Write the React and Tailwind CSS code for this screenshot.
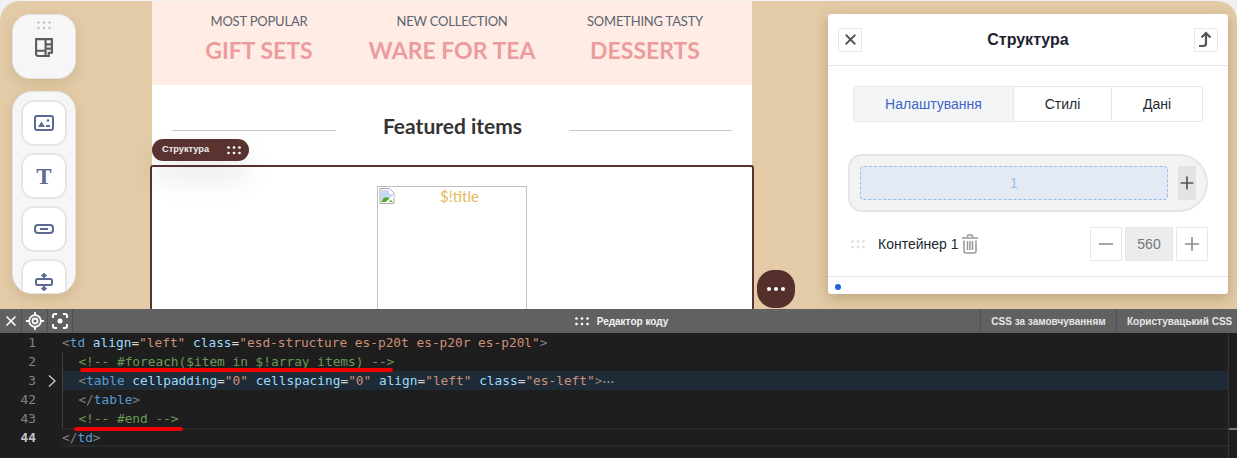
import { X, Minus, Plus, LocateFixed } from 'lucide-react';

const uiFont = "font-['Liberation_Sans',Arial,sans-serif]";
const emailFont = "font-['Lato','Noto_Sans',sans-serif]";

function Dots({ className = '', size = 2 }) {
  return (
    <svg width="14" height="9" viewBox="0 0 14 9" className={className} fill="currentColor">
      {[1.5, 7, 12.5].map((x) =>
        [1.5, 7].map((y) => <circle key={`${x}-${y}`} cx={x} cy={y} r={size / 1.2} />)
      )}
    </svg>
  );
}

function ToolButton({ children }) {
  return (
    <div className="w-[46px] h-[46px] shrink-0 rounded-[13px] bg-white border-2 border-[#e6e6e6] flex items-center justify-center">
      {children}
    </div>
  );
}

function LeftToolbar() {
  const ink = '#5a6a94';
  return (
    <div className="w-[152px] shrink-0 pl-3 pt-[13px] flex flex-col gap-3">
      <div className="w-16 h-[65px] rounded-[18px] bg-[#f6f6f6] border border-[#e4e4e4] shadow-[0_4px_12px_rgba(90,60,20,0.14)] flex flex-col items-center pt-[6px]">
        <Dots className="text-[#c4c4c4]" size={1.6} />
        <svg width="20" height="20" viewBox="0 0 19 19" fill="none" stroke="#5c5c5c" strokeWidth="2" className="mt-[7px]">
          <path d="M2 2h15v13h-3v3H4a2 2 0 0 1-2-2z" />
          <path d="M2 13h9v5M11 2v13M11 7h6M11 11h6" />
        </svg>
      </div>
      <div className="w-16 h-[203px] rounded-[20px] bg-[#f6f6f6] border border-[#e4e4e4] shadow-[0_4px_12px_rgba(90,60,20,0.14)] overflow-hidden flex flex-col items-center gap-[7px] pt-2">
        <ToolButton>
          <svg width="20" height="16" viewBox="0 0 20 16" fill="none">
            <rect x="1" y="1" width="18" height="14" rx="2" stroke={ink} strokeWidth="2" />
            <path d="M4 12l3.500-5.500L11 12z" fill={ink} />
            <circle cx="14" cy="5.500" r="1.300" fill={ink} />
            <rect x="12" y="10" width="4" height="2" fill={ink} />
          </svg>
        </ToolButton>
        <ToolButton>
          <span className="font-['Liberation_Serif',serif] text-[23px] leading-none font-bold text-[#5a6a94]">T</span>
        </ToolButton>
        <ToolButton>
          <svg width="20" height="10" viewBox="0 0 20 10" fill="none" stroke={ink} strokeWidth="2">
            <rect x="1" y="1" width="18" height="8" rx="3" />
            <path d="M6 5h8" />
          </svg>
        </ToolButton>
        <ToolButton>
          <svg width="18" height="18" viewBox="0 0 18 18" fill="none" stroke={ink} strokeWidth="2">
            <rect x="1" y="6" width="16" height="6" rx="1.500" />
            <path d="M9 1v5M6.500 3.200L9 1l2.500 2.200M9 12v5M6.500 14.800L9 17l2.500-2.200" />
          </svg>
        </ToolButton>
      </div>
    </div>
  );
}

function Promo({ small, big, width }) {
  return (
    <div className={`${width} shrink-0 flex flex-col items-center whitespace-nowrap`}>
      <p className="text-[13px] leading-[18px] tracking-[-0.2px] text-[#5d6470]">{small}</p>
      <p className="mt-[5px] text-[23px] leading-[30px] font-bold text-[#ed9c9e]">{big}</p>
    </div>
  );
}

function EmailCanvas() {
  return (
    <div className={`relative w-[600px] shrink-0 h-full bg-white ${emailFont}`}>
      <div className="h-[84px] bg-[#feece5] flex pt-[11px]">
        <Promo small="MOST POPULAR" big="GIFT SETS" width="w-[214px]" />
        <Promo small="NEW COLLECTION" big="WARE FOR TEA" width="w-[172px]" />
        <Promo small="SOMETHING TASTY" big="DESSERTS" width="w-[214px]" />
      </div>
      <div className="flex items-center px-5 h-[37px] mt-[24px]">
        <div className="w-[164px] h-px bg-[#c8c8c8] mt-[6px]" />
        <p className="w-[233px] text-center text-[21px] font-bold text-[#333333] -mt-[4px]">Featured items</p>
        <div className="w-[163px] h-px bg-[#c8c8c8] mt-[6px]" />
      </div>
      <div className="absolute left-[-2px] right-[-2px] top-[164px] bottom-0 border-2 border-b-0 border-[#5a3330] rounded-t-[3px] flex justify-center pl-[2px]">
        <div className="w-[150px] mt-[19px] ml-[-2px] border border-b-0 border-[#c0c0c0] relative text-center">
          <svg width="16" height="16" viewBox="0 0 16 16" className="absolute left-[1px] top-[1px]">
            <path d="M1 .5h9.500L15 5v10.500H1z" fill="#fff" stroke="#a9a9a9" />
            <path d="M2 2h8v4h4v4L2 12z" fill="#c7d9f5" />
            <path d="M2 14c2-5 6-6 9-3l3 3z" fill="#5aa832" />
            <path d="M7 15l8-7" stroke="#fff" strokeWidth="2" />
          </svg>
          <span className="block text-[15px] leading-[19px] text-[#e8b85c] ml-[16px] pr-[1px]">$!title</span>
        </div>
      </div>
      <div className={`absolute left-0 top-[138px] w-[97px] h-[22px] rounded-[11px] bg-[#5a3330] shadow-[0_16px_30px_rgba(0,0,0,0.10)] flex items-center justify-between pl-[10px] pr-[8px] ${uiFont}`}>
        <span className="text-[9.250px] font-bold text-[#ededed]">Структура</span>
        <Dots className="text-white" size={1.6} />
      </div>
    </div>
  );
}

function SidePanel() {
  return (
    <div className={`w-[400px] h-[280px] mt-[13px] ml-[76px] bg-white rounded-[3px] shadow-[0_4px_14px_rgba(90,60,20,0.28)] flex flex-col ${uiFont}`}>
      <div className="h-[52px] shrink-0 border-b border-[#e1e4e8] flex items-center justify-between px-[10px]">
        <div className="w-6 h-6 border border-[#e8e8e8] rounded-[2px] flex items-center justify-center">
          <X size={17} strokeWidth={2.6} className="text-[#555555]" />
        </div>
        <span className="text-[16px] font-bold text-[#1d2430]">Структура</span>
        <div className="w-6 h-6 border border-[#e8e8e8] rounded-[2px] flex items-center justify-center">
          <svg width="15" height="17" viewBox="0 0 15 17" fill="none" stroke="#555555" strokeWidth="2.200">
            <path d="M1 15h4c1.500 0 3-1 3-2.500V2.500M3.500 6.500L8 2l4.500 4.500" />
          </svg>
        </div>
      </div>
      <div className="mx-[25px] mt-5 h-[36px] flex border border-[#e6e8ec] rounded-[3px] text-[14px] text-[#222831]">
        <div className="w-[160px] bg-[#f4f5f7] text-[#3f66c9] border-r border-[#e6e8ec] flex items-center justify-center">Налаштування</div>
        <div className="w-[98px] border-r border-[#e6e8ec] flex items-center justify-center">Стилі</div>
        <div className="flex-1 flex items-center justify-center">Дані</div>
      </div>
      <div className="mx-5 mt-8 h-[58px] rounded-l-[14px] rounded-r-[29px] bg-[#f3f3f3] border-2 border-[#e5e5e5] flex items-center pl-[10px]">
        <div className="w-[308px] h-[34px] rounded-[4px] bg-[#e4eaf4] border border-dashed border-[#94bdf0] flex items-center justify-center text-[14px] text-[#94bdf0]">1</div>
        <div className="w-[18px] h-[34px] ml-[10px] bg-[#e3e3e3] flex items-center justify-center">
          <Plus size={20} strokeWidth={2} className="text-[#555555] shrink-0" />
        </div>
      </div>
      <div className="mt-[15px] h-[34px] flex items-center pl-[23px] pr-5">
        <Dots className="text-[#dcdcdc]" size={1.6} />
        <span className="ml-[13px] text-[14px] text-[#222831]">Контейнер 1</span>
        <svg width="16" height="20" viewBox="0 0 16 20" fill="none" stroke="#999999" strokeWidth="1.500" className="ml-[3px]">
          <path d="M5.500 3V2a1 1 0 0 1 1-1h3a1 1 0 0 1 1 1v1M0 4h16M2 6.500V17a2 2 0 0 0 2 2h8a2 2 0 0 0 2-2V6.500M5.500 7v9M8 7v9M10.500 7v9" />
        </svg>
        <div className="ml-auto flex gap-[3px]">
          <div className="w-8 h-[34px] border border-[#e6e8ec] flex items-center justify-center">
            <Minus size={22} strokeWidth={1.8} className="text-[#8a8a8a] shrink-0" />
          </div>
          <div className="w-12 h-[34px] bg-[#ebecee] border border-[#e6e8ec] flex items-center justify-center text-[14px] text-[#777777]">560</div>
          <div className="w-8 h-[34px] border border-[#e6e8ec] flex items-center justify-center">
            <Plus size={22} strokeWidth={1.8} className="text-[#8a8a8a] shrink-0" />
          </div>
        </div>
      </div>
      <div className="mt-[15px] flex-1 border-t border-[#e4e6ea] pl-[7px] pt-[7px]">
        <div className="w-[6px] h-[6px] rounded-full bg-[#2160d8]" />
      </div>
    </div>
  );
}

const tag = 'text-[#569cd6]';
const attr = 'text-[#9cdcfe]';
const str = 'text-[#ce9178]';
const punct = 'text-[#808080]';
const comment = 'text-[#6a9955]';
const plain = 'text-[#d4d4d4]';

function CodeLine({ num, active, caret, guide, highlight, children }) {
  return (
    <div className="h-[19px] flex">
      <div className={`w-[36px] shrink-0 text-right ${active ? 'text-[#c6c6c6] font-bold' : 'text-[#858585]'}`}>{num}</div>
      <div className="w-[26px] shrink-0 flex items-center pl-[12px]">
        {caret && (
          <svg width="8" height="12" viewBox="0 0 8 12" fill="none" stroke="#c5c5c5" strokeWidth="1.500">
            <path d="M1 .5L7 6l-6 5.500" />
          </svg>
        )}
      </div>
      <div className={`flex-1 flex items-center whitespace-pre ${highlight ? 'bg-[#1f2b36]' : ''} ${active ? 'shadow-[inset_0_2px_0_#282828,inset_0_-2px_0_#282828]' : ''} ${guide ? 'border-l border-[#404040]' : ''}`}>
        <span>{children}</span>
      </div>
    </div>
  );
}

function CodeEditor() {
  return (
    <div className="flex-1 min-h-0 bg-[#1e1e1e] relative font-['DejaVu_Sans_Mono','Liberation_Mono',monospace] text-[12.800px] leading-[19px] pr-[9px]">
      <CodeLine num="1">
        <span className={punct}>{'<'}</span><span className={tag}>td</span><span className={attr}> align</span><span className={plain}>=</span><span className={str}>"left"</span><span className={attr}> class</span><span className={plain}>=</span><span className={str}>"esd-structure es-p20t es-p20r es-p20l"</span><span className={punct}>{'>'}</span>
      </CodeLine>
      <CodeLine num="2" guide>
        <span className={comment}>{'  <!-- #foreach($item in $!array items) -->'}</span>
      </CodeLine>
      <CodeLine num="3" caret guide highlight>
        <span className={punct}>{'  <'}</span><span className={tag}>table</span><span className={attr}> cellpadding</span><span className={plain}>=</span><span className={str}>"0"</span><span className={attr}> cellspacing</span><span className={plain}>=</span><span className={str}>"0"</span><span className={attr}> align</span><span className={plain}>=</span><span className={str}>"left"</span><span className={attr}> class</span><span className={plain}>=</span><span className={str}>"es-left"</span><span className={punct}>{'>'}</span>
        <svg width="11" height="4" viewBox="0 0 11 4" fill="#9a9a9a" className="inline-block ml-[1px] align-middle">
          <circle cx="1.500" cy="2" r="1" />
          <circle cx="5.500" cy="2" r="1" />
          <circle cx="9.500" cy="2" r="1" />
        </svg>
      </CodeLine>
      <CodeLine num="42" guide>
        <span className={punct}>{'  </'}</span><span className={tag}>table</span><span className={punct}>{'>'}</span>
      </CodeLine>
      <CodeLine num="43" guide>
        <span className={comment}>{'  <!-- #end -->'}</span>
      </CodeLine>
      <CodeLine num="44" active>
        <span className={punct}>{'</'}</span><span className={tag}>td</span><span className={punct}>{'>'}</span>
      </CodeLine>
      {/* hand drawn red underlines on top of the code */}
      <div className="absolute left-[80px] top-[35px] w-[313px] h-[4px] rounded-full bg-[#f00000]" />
      <div className="absolute left-[74px] top-[94px] w-[109px] h-[4px] rounded-full bg-[#f00000]" />
      <div className="absolute right-0 top-0 bottom-0 w-[9px] border-l border-[#333333]">
        <div className="mt-[95px] h-[2px] bg-[#7a7a7a]" />
      </div>
    </div>
  );
}

function EditorBar() {
  return (
    <div className={`relative h-[24px] shrink-0 bg-[#616161] flex items-stretch text-white ${uiFont}`}>
      <div className="w-[22px] border-r border-[#4f4f4f] flex items-center justify-center">
        <X size={16} strokeWidth={2.4} />
      </div>
      <div className="w-[26px] border-r border-[#4f4f4f] flex items-center justify-center">
        <LocateFixed size={20} strokeWidth={2.2} />
      </div>
      <div className="w-[25px] border-r border-[#4f4f4f] flex items-center justify-center">
        <svg width="16" height="16" viewBox="0 0 16 16" fill="none" stroke="currentColor" strokeWidth="2">
          <path d="M1 5V3a2 2 0 0 1 2-2h2M11 1h2a2 2 0 0 1 2 2v2M15 11v2a2 2 0 0 1-2 2h-2M5 15H3a2 2 0 0 1-2-2v-2" />
          <circle cx="8" cy="8" r="2.500" fill="currentColor" stroke="none" />
        </svg>
      </div>
      <div className="flex-1 flex items-center justify-center gap-2 text-[10px] font-bold text-[#f2f2f2] pl-[190px]">
        <Dots className="text-white" size={1.6} />
        <span>Редактор коду</span>
      </div>
      <div className="w-[136px] border-l border-[#4f4f4f] flex items-center justify-center text-[10px] font-bold text-[#e6e6e6]">CSS за замовчуванням</div>
      <div className="w-[121px] border-l border-[#4f4f4f] flex items-center pl-[10px] whitespace-nowrap text-[10px] font-bold text-[#e6e6e6]">Користувацький CSS</div>
    </div>
  );
}

export default function App() {
  return (
    <div className="w-[1237px] h-[458px] overflow-hidden flex flex-col bg-[#f0f0f0]">
      <div className="relative h-[308px] shrink-0 mt-px rounded-t-[20px] bg-[#e2cba6] flex">
        <LeftToolbar />
        <EmailCanvas />
        <SidePanel />
        <div className="absolute left-[757px] top-[269px] w-[38px] h-[38px] rounded-[17px] bg-[#552f2b] flex items-center justify-center gap-[3px]">
          <span className="w-1 h-1 rounded-full bg-white" />
          <span className="w-1 h-1 rounded-full bg-white" />
          <span className="w-1 h-1 rounded-full bg-white" />
        </div>
      </div>
      <EditorBar />
      <CodeEditor />
    </div>
  );
}
